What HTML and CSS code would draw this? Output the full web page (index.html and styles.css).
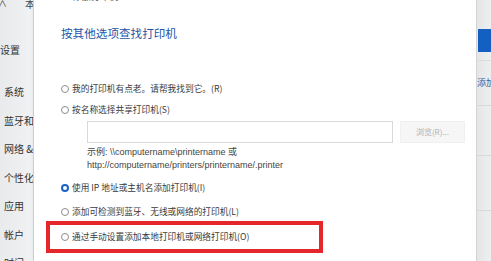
FILE: index.html
```html
<!DOCTYPE html>
<html lang="zh-CN">
<head>
<meta charset="utf-8">
<title>添加打印机</title>
<link rel="stylesheet" href="styles.css">
</head>
<body>
<div class="screen">
  <aside class="side">
    <div class="side-top"><span class="chev">∧</span><span class="ben">本</span></div>
    <div class="side-title">设置</div>
    <nav class="side-nav">
      <div class="nav-item">系统</div>
      <div class="nav-item">蓝牙和</div>
      <div class="nav-item">网络 &amp;</div>
      <div class="nav-item">个性化</div>
      <div class="nav-item">应用</div>
      <div class="nav-item">帐户</div>
      <div class="nav-item">时间</div>
    </nav>
  </aside>

  <main class="dialog">
    <div class="dlg-caption">
      <svg class="dlg-icon" width="8" height="8" viewBox="0 0 8 8"><rect x="1" y="2" width="6" height="4" fill="#8a8f98"/></svg>
      <span>添加打印机</span>
    </div>
    <h2 class="dlg-heading">按其他选项查找打印机</h2>

    <div class="opt opt-first"><span class="radio"></span><span>我的打印机有点老。请帮我找到它。(R)</span></div>
    <div class="opt opt-second"><span class="radio"></span><span>按名称选择共享打印机(S)</span></div>
    <div class="share-row">
      <div class="share-input"></div>
      <div class="browse-btn">浏览(R)...</div>
    </div>
    <div class="example">
      <div>示例: \\computername\printername 或</div>
      <div>http://computername/printers/printername/.printer</div>
    </div>
    <div class="opt opt-ip"><span class="radio checked"></span><span>使用 IP 地址或主机名添加打印机(I)</span></div>
    <div class="opt opt-bt"><span class="radio"></span><span>添加可检测到蓝牙、无线或网络的打印机(L)</span></div>
    <div class="opt opt-local"><span class="radio"></span><span>通过手动设置添加本地打印机或网络打印机(O)</span></div>

    <div class="highlight"></div>
  </main>

  <aside class="right">
    <div class="right-top"></div>
    <div class="right-btn"></div>
    <div class="right-line"></div>
    <div class="right-text">添加</div>
    <div class="right-sep r1"></div>
    <div class="right-sep r2"></div>
    <div class="right-sep r3"></div>
  </aside>
</div>
</body>
</html>
```

FILE: styles.css
```css
* { box-sizing: border-box; margin: 0; padding: 0; }
html, body { width: 491px; height: 261px; overflow: hidden; background: #fff; }
body { font-family: "Noto Sans CJK SC", "Noto Sans", sans-serif; color: #333; }

.screen { display: flex; width: 491px; height: 261px; }

/* left settings strip */
.side {
  width: 34px; flex: none;
  background: linear-gradient(90deg, #e9eaec 0%, #eeeff1 70%, #f2f3f4 100%);
  border-right: 1px solid #d6d7d9;
  overflow: hidden;
  white-space: nowrap;
}
.side-top { height: 14px; font-size: 10px; line-height: 10px; color: #444; display: flex; gap: 18px; }
.chev { margin-top: -1px; margin-left: -2px; font-size: 9px; }
.ben { margin-top: -1px; }
.side-title { margin-top: 29px; font-size: 10px; line-height: 14px; color: #333; }
.side-nav { margin-top: 28px; display: flex; flex-direction: column; gap: 14.5px; }
.nav-item { font-size: 10px; line-height: 14px; color: #333; padding-left: 4px; }

/* dialog */
.dialog {
  width: 443px; flex: none;
  position: relative;
  background: #fff;
  border-right: 1px solid #d4d4d4;
  padding-left: 27px;
  box-shadow: -2px 0 3px rgba(0,0,0,0.05);
}
.dlg-caption {
  height: 6px; margin-top: -6px;
  display: flex; align-items: center; gap: 4px;
  font-size: 9px; line-height: 10px; color: #555;
}
.dlg-heading {
  margin-top: 26px;
  font-size: 11.6px; line-height: 14px; font-weight: 400;
  color: #2355a6;
}
.opt {
  display: flex; align-items: center; gap: 3px;
  font-size: 8.7px; line-height: 12px; color: #3a3a3a;
  white-space: nowrap;
}
.radio {
  width: 8px; height: 8px; border-radius: 50%;
  border: 1px solid #8d8d8d; background: #fff; flex: none;
}
.radio.checked { border: 2.5px solid #1b63c6; background: #fff; }
.opt-first { margin-top: 43px; }
.opt-second { margin-top: 9px; }

.share-row { display: flex; gap: 7px; margin-top: 5px; padding-left: 26px; }
.share-input { width: 306px; height: 22px; border: 1px solid #d9d9d9; background: #fff; }
.browse-btn {
  width: 65px; height: 22px; background: #f6f6f6; border: 1px solid #f0f0f0;
  font-size: 8px; line-height: 20px; color: #b0b0b0; text-align: center;
}
.example {
  padding-left: 26px; margin-top: 3px;
  font-family: "Liberation Sans", "Noto Sans CJK SC", sans-serif;
  font-size: 9px; line-height: 13px; color: #444; white-space: nowrap;
}
.opt-ip { margin-top: 10px; }
.opt-bt { margin-top: 12px; }
.opt-local { margin-top: 13px; }

.highlight {
  position: absolute; left: 12px; top: 221px;
  width: 277px; height: 32px;
  border: 4px solid #e5262b;
}

/* right strip */
.right {
  flex: 1; position: relative;
  background: linear-gradient(90deg, #e4e5e7, #eeeff0);
  overflow: hidden;
}
.right-top { height: 29px; }
.right-btn { height: 23px; margin-left: 1px; background: #1460c2; }
.right-line { height: 1px; margin-top: 8px; background: #dcdcdc; }
.right-text { margin-top: 17px; font-size: 9px; line-height: 10px; color: #3a5da0; white-space: nowrap; }
.right-sep { position: absolute; left: 0; right: 0; height: 1px; background: #d8d8d8; }
.r1 { top: 105px; } .r2 { top: 155px; } .r3 { top: 210px; }
```
